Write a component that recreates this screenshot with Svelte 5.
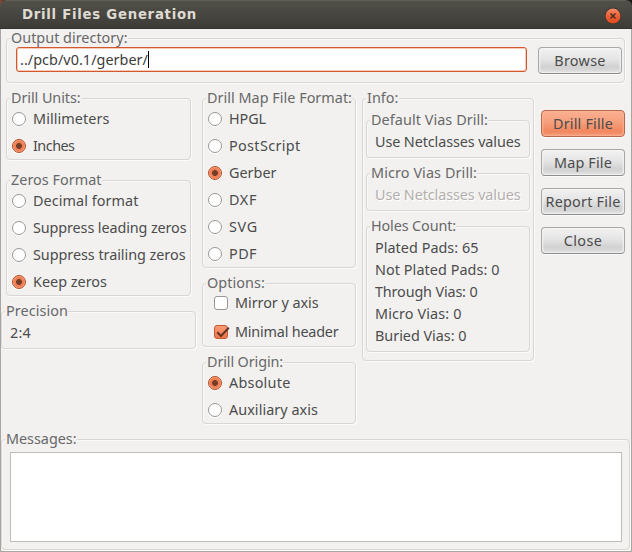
<script>
  // Spreads a label's letters so that it fills the given width.
  function fit(node, width) {
    const natural = node.getBoundingClientRect().width;
    node.style.letterSpacing = `${(width - natural) / node.textContent.length}px`;
  }

  let units = $state('Inches');
  let zeros = $state('Keep zeros');
  let format = $state('Gerber');
  let origin = $state('Absolute');
  let options = $state([
    { text: 'Mirror y axis', width: 83.5, on: false },
    { text: 'Minimal header', width: 103.5, on: true }
  ]);

  const unitItems = [['Millimeters', 76.5], ['Inches', 41.5]];
  const zeroItems = [
    ['Decimal format', 105.5],
    ['Suppress leading zeros', 153.5],
    ['Suppress trailing zeros', 152.5],
    ['Keep zeros', 74]
  ];
  const formatItems = [
    ['HPGL', 37], ['PostScript', 71.5], ['Gerber', 47.5],
    ['DXF', 28], ['SVG', 29], ['PDF', 28]
  ];
  const originItems = [['Absolute', 61.5], ['Auxiliary axis', 89]];
  const holes = [
    ['Plated Pads: 65', 103.5],
    ['Not Plated Pads: 0', 124.5],
    ['Through Vias: 0', 102.5],
    ['Micro Vias: 0', 86.5],
    ['Buried Vias: 0', 91.5]
  ];
  const actions = [
    ['Drill Fille', 60], ['Map File', 58], ['Report File', 75], ['Close', 38.5]
  ];
</script>

{#snippet label(text, width)}
  <span class="text" use:fit={width}>{text}</span>
{/snippet}

{#snippet legend(text, width)}
  <div class="legend"><span class="caption">{@render label(text, width)}</span></div>
{/snippet}

{#snippet radios(items, current, pick)}
  {#each items as [text, width]}
    <div class="row" role="radio" tabindex="-1" aria-checked={current === text}
      onclick={() => pick(text)} onkeydown={() => pick(text)}>
      <span class="radio" class:on={current === text}></span>
      {@render label(text, width)}
    </div>
  {/each}
{/snippet}

<div class="desktop">
<div class="window">
  <header>
    <span class="title" use:fit={175}>Drill Files Generation</span>
    <svg class="close" width="18" height="18" viewBox="0 0 18 18">
      <defs>
        <linearGradient id="orb" x1="0" y1="0" x2="0" y2="1">
          <stop offset="0" stop-color="#f58c67" />
          <stop offset="0.5" stop-color="#ec6037" />
          <stop offset="1" stop-color="#df4a1c" />
        </linearGradient>
      </defs>
      <circle cx="9" cy="9" r="8.2" fill="#33322e" />
      <circle cx="9" cy="9" r="7.5" fill="url(#orb)" />
      <path d="M6.5 6.5l5 5M11.5 6.5l-5 5" stroke="#432b20" stroke-width="1.4" />
    </svg>
  </header>

  <main>
    <section class="group output">
      {@render legend('Output directory:', 116.5)}
      <div class="path">
        <div class="entry">{@render label('../pcb/v0.1/gerber/', 128)}<i class="caret"></i></div>
        <button class="browse">{@render label('Browse', 51.5)}</button>
      </div>
    </section>

    <div class="columns">
      <div class="left">
        <section class="group units">
          {@render legend('Drill Units:', 69.5)}
          {@render radios(unitItems, units, (v) => (units = v))}
        </section>
        <section class="group zeros">
          {@render legend('Zeros Format', 90.5)}
          {@render radios(zeroItems, zeros, (v) => (zeros = v))}
        </section>
        <section class="group precision">
          {@render legend('Precision', 62)}
          <div class="value">{@render label('2:4', 21)}</div>
        </section>
      </div>

      <div class="middle">
        <section class="group format">
          {@render legend('Drill Map File Format:', 145)}
          {@render radios(formatItems, format, (v) => (format = v))}
        </section>
        <section class="group options">
          {@render legend('Options:', 58)}
          {#each options as option}
            <div class="row tick" role="checkbox" tabindex="-1" aria-checked={option.on}
              onclick={() => (option.on = !option.on)} onkeydown={() => (option.on = !option.on)}>
              <span class="check" class:on={option.on}>
                {#if option.on}
                  <svg width="16" height="14" viewBox="0 0 16 14">
                    <path d="M2.2 6.2L6 10L13.8 1.8" fill="none" stroke="#633421" stroke-width="2" />
                  </svg>
                {/if}
              </span>
              {@render label(option.text, option.width)}
            </div>
          {/each}
        </section>
        <section class="group origin">
          {@render legend('Drill Origin:', 76)}
          {@render radios(originItems, origin, (v) => (origin = v))}
        </section>
      </div>

      <section class="group info">
        {@render legend('Info:', 31.5)}
        <section class="group vias">
          {@render legend('Default Vias Drill:', 117)}
          <div class="value">{@render label('Use Netclasses values', 145.5)}</div>
        </section>
        <section class="group vias">
          {@render legend('Micro Vias Drill:', 106)}
          <div class="value dim">{@render label('Use Netclasses values', 145.5)}</div>
        </section>
        <section class="group holes">
          {@render legend('Holes Count:', 85)}
          {#each holes as [text, width]}
            <div class="value">{@render label(text, width)}</div>
          {/each}
        </section>
      </section>

      <div class="actions">
        {#each actions as [text, width], i}
          <button class:primary={i === 0}>{@render label(text, width)}</button>
        {/each}
      </div>
    </div>

    <section class="group messages">
      {@render legend('Messages:', 70.5)}
      <div class="log"></div>
    </section>
  </main>
</div>
</div>

<style>
  :global(body) { margin: 0; }
  .desktop { width: 632px; height: 552px; background: linear-gradient(90deg, #8a4a30, #1c1a18 8px); }
  .window, .window * { box-sizing: border-box; }
  .window {
    width: 632px;
    height: 552px;
    display: flex;
    flex-direction: column;
    font: 14.4px/20px "Noto Sans", "Open Sans", sans-serif;
    color: #4c4c4c;
    cursor: default;
    overflow: hidden;
    border-radius: 6px 6px 0 0;
  }
  header {
    flex: none;
    height: 29px;
    display: flex;
    align-items: center;
    justify-content: space-between;
    padding: 0 10px 0 22px;
    background: linear-gradient(#504f48, #3d3c37);
    border-top: 1px solid #5f5d55;
    border-bottom: 1px solid #33322e;
    border-radius: 6px 6px 0 0;
  }
  .title {
    font: bold 13.3px/20px "DejaVu Sans", sans-serif;
    color: #dfdbd2;
    white-space: nowrap;
  }
  .close { display: block; margin-top: 2px; }
  main {
    flex: 1;
    display: flex;
    flex-direction: column;
    background: #f2f1f0;
    border: 1px solid #aaa69f;
    border-top: 0;
    padding-top: 9px;
  }
  .text { white-space: nowrap; flex: none; display: inline-block; }
  .group {
    border: 1px solid #d8d6d4;
    border-radius: 4px;
    box-shadow: 1px 1px 0 #fbfbfa, inset 1px 1px 0 #f9f9f8;
    display: flex;
    flex-direction: column;
    flex: none;
  }
  .legend {
    flex: none;
    height: 0;
    display: flex;
    align-items: center;
    padding-left: 3px;
  }
  .caption {
    background: #f2f1f0;
    color: #686868;
    padding-left: 1px;
    height: 14px;
    line-height: 14px;
    position: relative;
    top: -1px;
  }
  .output { margin-left: 5px; width: 619px; height: 45px; }
  .path { display: flex; justify-content: space-between; padding: 8px 2px 0 9px; }
  .entry {
    width: 511px;
    height: 25px;
    display: flex;
    align-items: center;
    padding-left: 3px;
    background: #fff;
    border: 1px solid #d4582d;
    border-radius: 3px;
    box-shadow: inset 0 0 0 1px #f8c9b6;
    color: #3c3c3c;
  }
  .caret { width: 1px; height: 17px; background: #000; }
  button {
    width: 84px;
    height: 27px;
    flex: none;
    display: flex;
    align-items: center;
    justify-content: center;
    padding: 0;
    font: inherit;
    color: #4c4c4c;
    border: 1px solid #a9a7a5;
    border-bottom-color: #8f8d8b;
    border-radius: 4px;
    background: linear-gradient(#f2f2f2, #e4e4e4 45%, #d2d2d2 75%, #dcdcdc);
    box-shadow: inset 0 0 2px 1px #f4f4f4, 0 1px 0 #fafafa;
  }
  .primary {
    border-color: #b5694b;
    background: linear-gradient(#fbb092, #f69f7c 45%, #f1875f 80%, #f39773);
    box-shadow: inset 0 0 2px 1px #fbb294, 0 1px 0 #fafafa;
  }
  .columns { display: flex; align-items: flex-start; height: 341px; padding-top: 15px; }
  .left { width: 195px; flex: none; display: flex; flex-direction: column; }
  .units, .zeros { margin-left: 5px; width: 185px; padding-left: 5px; }
  .units > .legend, .zeros > .legend { margin-left: -5px; }
  .units { height: 62px; }
  .zeros { height: 116px; margin-top: 20px; }
  .precision { height: 38px; margin-top: 15px; width: 195px; }
  .row { flex: none; height: 27px; display: flex; align-items: center; gap: 7px; }
  .units .row, .zeros .row, .format .row, .origin .row { position: relative; top: 6.5px; }
  .radio {
    width: 14px;
    height: 14px;
    flex: none;
    border-radius: 50%;
    border: 1px solid #999693;
    background: #fff;
    box-shadow: 0 1px 0 #fff;
  }
  .radio.on {
    border-color: #b54c27;
    background: radial-gradient(circle, #763e29 0 2.6px, #f08257 3.3px, #ef7d51 4.6px, #f9a887 6px);
  }
  .middle { width: 154px; margin-left: 6px; flex: none; display: flex; flex-direction: column; }
  .format, .origin { padding-left: 5px; }
  .format > .legend, .origin > .legend { margin-left: -5px; }
  .format { height: 170px; }
  .options { height: 64px; margin-top: 15px; }
  .origin { height: 62px; margin-top: 15px; }
  .tick { height: 29px; padding-left: 11px; position: relative; top: 4.5px; }
  .check {
    width: 14px;
    height: 14px;
    flex: none;
    border: 1px solid #999693;
    border-radius: 3px;
    background: #fff;
  }
  .check.on { border-color: #c05b36; background: linear-gradient(#f79c77, #ee7548); }
  .check svg { display: block; overflow: visible; }
  .info { width: 172px; height: 263px; margin-left: 6px; padding: 0 3px; }
  .info > .legend { margin-left: -3px; }
  .vias { height: 38px; margin-top: 21px; }
  .vias + .vias { margin-top: 15px; }
  .holes { height: 126px; margin-top: 15px; }
  .value { height: 22px; flex: none; display: flex; align-items: center; padding-left: 8px; position: relative; top: 10px; }
  .dim { color: #b2afac; text-shadow: 1px 1px 0 #fff; }
  .actions { display: flex; flex-direction: column; gap: 12px; margin-left: 7px; padding-top: 12px; }
  .messages { width: 629px; height: 111px; margin-top: 15px; }
  .log { margin: 12px 0 0 8px; width: 612px; height: 90px; background: #fff; border: 1px solid #bfbdb9; }
</style>
